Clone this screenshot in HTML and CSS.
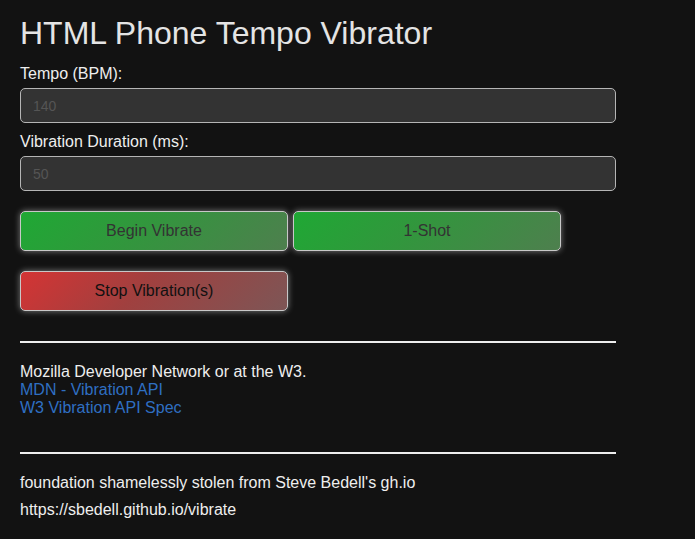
FILE: index.html
```html
<!DOCTYPE html>
<html lang="en">
<head>
<meta charset="utf-8">
<title>HTML Phone Tempo Vibrator</title>
<link rel="stylesheet" href="styles.css">
</head>
<body>
<main class="page">
  <h1 class="title">HTML Phone Tempo Vibrator</h1>
  <label class="field-label" for="tempo">Tempo (BPM):</label>
  <input class="field" id="tempo" type="text" placeholder="140">
  <label class="field-label" for="duration">Vibration Duration (ms):</label>
  <input class="field" id="duration" type="text" placeholder="50">
  <div class="btn-row">
    <button class="btn btn-go" type="button">Begin Vibrate</button>
    <button class="btn btn-go" type="button">1-Shot</button>
  </div>
  <div class="btn-row">
    <button class="btn btn-stop" type="button">Stop Vibration(s)</button>
  </div>
  <hr class="rule rule-first">
  <div class="refs">
    Mozilla Developer Network or at the W3.<br>
    <a class="link" href="#">MDN - Vibration API</a><br>
    <a class="link" href="#">W3 Vibration API Spec</a>
  </div>
  <hr class="rule rule-second">
  <p class="credit">foundation shamelessly stolen from Steve Bedell's gh.io</p>
  <p class="credit">https://sbedell.github.io/vibrate</p>
</main>
</body>
</html>
```
FILE: styles.css
```css
html, body {
  margin: 0;
  padding: 0;
  background: #121212;
}

body {
  color: #eeeeee;
  font-family: "Liberation Sans", Arial, sans-serif;
  font-size: 16px;
}

.page {
  width: 596px;
  padding: 15px 20px 0 20px;
  display: flex;
  flex-direction: column;
}

.title {
  margin: 0 0 13px 0;
  font-size: 32px;
  font-weight: normal;
  color: #e4e4e4;
  line-height: 37px;
}

.field-label {
  display: block;
  line-height: 18px;
  margin-bottom: 5px;
}

.field {
  box-sizing: border-box;
  width: 596px;
  height: 35px;
  margin: 0 0 10px 0;
  padding: 0 12px;
  background: #333333;
  border: 1px solid #b5b5b5;
  border-radius: 5px;
  color: #eeeeee;
  font-family: "Liberation Sans", Arial, sans-serif;
  font-size: 14px;
  outline: none;
}

.field::placeholder {
  color: #555555;
}

.btn-row {
  display: flex;
  gap: 5px;
  margin-top: 10px;
}

.btn-row + .btn-row {
  margin-top: 20px;
}

.btn {
  box-sizing: border-box;
  width: 268px;
  height: 40px;
  border: 1px solid #c8c8c8;
  border-radius: 5px;
  box-shadow: 0 0 6px rgba(255, 255, 255, 0.45);
  font-family: "Liberation Sans", Arial, sans-serif;
  font-size: 16px;
  padding: 0;
}

.btn-go {
  background: linear-gradient(135deg, #1fa834 0%, #32963d 45%, #4e7f4e 100%);
  color: #333333;
}

.btn-stop {
  background: linear-gradient(135deg, #d43434 0%, #a0403f 45%, #7d5656 100%);
  color: #111111;
}

.rule {
  width: 596px;
  height: 2px;
  margin: 0;
  border: 0;
  background: #eeeeee;
}

.rule-first {
  margin-top: 30px;
}

.refs {
  margin-top: 20px;
  line-height: 18px;
}

.link {
  color: #2f6fc2;
  text-decoration: none;
}

.rule-second {
  margin-top: 35px;
}

.credit {
  margin: 0;
  line-height: 18px;
}

.rule-second + .credit {
  margin-top: 20px;
}

.credit + .credit {
  margin-top: 9px;
}
```
